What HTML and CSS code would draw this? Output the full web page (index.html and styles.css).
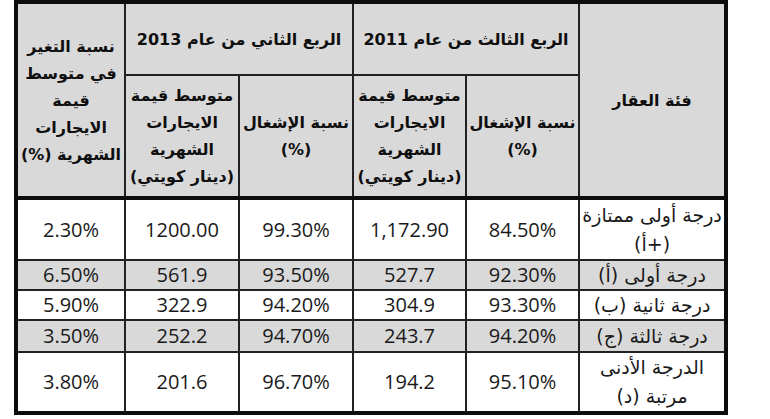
FILE: index.html
```html
<!DOCTYPE html>
<html lang="ar">
<head>
<meta charset="utf-8">
<link rel="stylesheet" href="styles.css">
</head>
<body>
<table class="grid" dir="rtl">
  <colgroup>
    <col class="c-cat"><col class="c-e"><col class="c-d"><col class="c-c"><col class="c-b"><col class="c-a">
  </colgroup>
  <thead>
    <tr class="h1">
      <th rowspan="2" class="cat-head">فئة العقار</th>
      <th colspan="2" class="period">الربع الثالث من عام 2011</th>
      <th colspan="2" class="period">الربع الثاني من عام 2013</th>
      <th rowspan="2" class="chg-head">نسبة التغير<br>في متوسط<br>قيمة<br>الايجارات<br>الشهرية (%)</th>
    </tr>
    <tr class="h2">
      <th>نسبة الإشغال<br>(%)</th>
      <th>متوسط قيمة<br>الايجارات<br>الشهرية<br>(دينار كويتي)</th>
      <th>نسبة الإشغال<br>(%)</th>
      <th>متوسط قيمة<br>الايجارات<br>الشهرية<br>(دينار كويتي)</th>
    </tr>
  </thead>
  <tbody>
    <tr class="r-tall">
      <td class="cat two">درجة أولى ممتازة<br>(+أ)</td>
      <td>84.50%</td><td>1,172.90</td><td>99.30%</td><td>1200.00</td><td>2.30%</td>
    </tr>
    <tr class="r-short shade">
      <td class="cat">درجة أولى (أ)</td>
      <td>92.30%</td><td>527.7</td><td>93.50%</td><td>561.9</td><td>6.50%</td>
    </tr>
    <tr class="r-short">
      <td class="cat">درجة ثانية (ب)</td>
      <td>93.30%</td><td>304.9</td><td>94.20%</td><td>322.9</td><td>5.90%</td>
    </tr>
    <tr class="r-short4 shade">
      <td class="cat">درجة ثالثة (ج)</td>
      <td>94.20%</td><td>243.7</td><td>94.70%</td><td>252.2</td><td>3.50%</td>
    </tr>
    <tr class="r-last">
      <td class="cat two">الدرجة الأدنى<br>مرتبة (د)</td>
      <td>95.10%</td><td>194.2</td><td>96.70%</td><td>201.6</td><td>3.80%</td>
    </tr>
  </tbody>
</table>
</body>
</html>
```
FILE: styles.css
```css
html, body {
  margin: 0;
  padding: 0;
  background: #ffffff;
}

.grid {
  margin-left: 14px;
  width: 714px;
  table-layout: fixed;
  border-collapse: collapse;
  border: 4px solid #0d0d0d;
  font-family: "DejaVu Sans", sans-serif;
  color: #151515;
}

.c-cat { width: 147px; }
.c-e { width: 113px; }
.c-d { width: 113px; }
.c-c { width: 114px; }
.c-b { width: 114px; }
.c-a { width: 109px; }

.grid th,
.grid td {
  border: 2px solid #222;
  padding: 0;
  text-align: center;
  vertical-align: middle;
  white-space: nowrap;
}

.grid th {
  background: #d9d9d9;
  font-weight: bold;
  font-size: 16px;
  line-height: 27px;
  color: #0f0f0f;
}

.h1 { height: 73px; }
.h2 { height: 123px; }

.period { padding-top: 2px; }

.chg-head {
  line-height: 28.5px;
  padding-bottom: 6px;
}

.grid thead tr.h2 th,
.grid thead .cat-head,
.grid thead .chg-head {
  border-bottom: 4px solid #0d0d0d;
}

.grid td {
  font-family: "Open Sans", "DejaVu Sans", sans-serif;
  font-size: 20px;
  line-height: 24px;
  color: #1a1a1a;
}

.grid td.cat {
  font-family: "DejaVu Sans", sans-serif;
  font-size: 19px;
  line-height: 24px;
}

.grid td.cat.two {
  line-height: 29px;
}

.shade td { background: #d9d9d9; }

.r-tall { height: 62px; }
.r-short { height: 30px; }
.r-short4 { height: 32px; }
.r-last { height: 60px; }
```
